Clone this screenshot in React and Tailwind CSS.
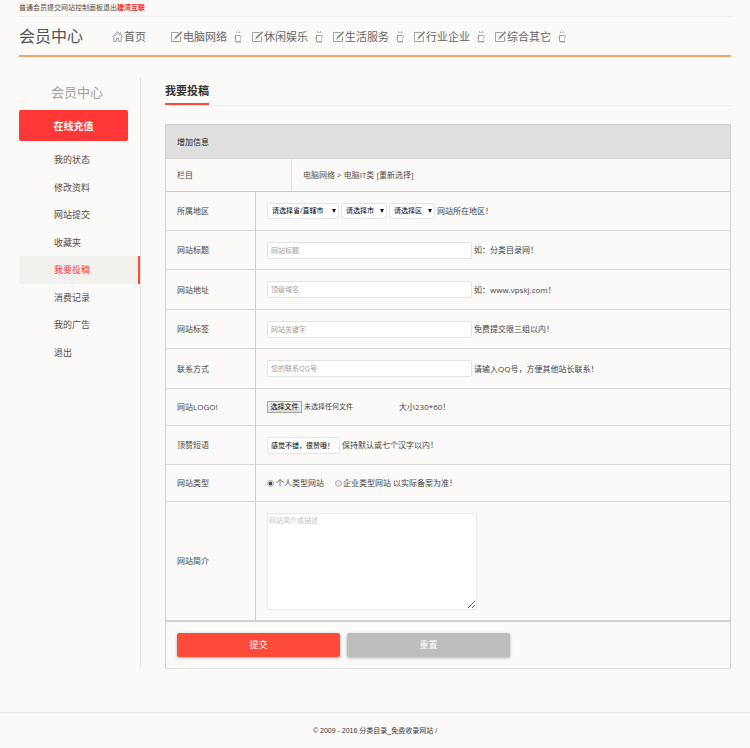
import React, { useState } from "react";

const navs = ["电脑网络", "休闲娱乐", "生活服务", "行业企业", "综合其它"];

const menus = [
  "我的状态",
  "修改资料",
  "网站提交",
  "收藏夹",
  "我要投稿",
  "消费记录",
  "我的广告",
  "退出",
];

function HomeIcon() {
  return (
    <svg width="11" height="11" viewBox="0 0 11 11" fill="none" stroke="#8a8a8a">
      <path d="M0.5 5.8 5.5 0.8 10.5 5.8" strokeWidth="0.9" />
      <path d="M1.8 5.5V10.4H4.3V7.2H6.7V10.4H9.2V5.5" strokeWidth="0.8" />
      <path d="M2.8 5.2 5.5 2.6 8.2 5.2M8.6 1V3" strokeWidth="0.6" />
    </svg>
  );
}

function EditIcon() {
  return (
    <svg width="12" height="11" viewBox="0 0 12 11" fill="none">
      <path d="M7.5 1.5H0.5V10.5H9.5V5.5" stroke="#a2a2a2" />
      <path d="M4.2 7.2 10.6 0.9" stroke="#8a8a8a" strokeWidth="1.8" />
      <path d="M3.2 8.3 4.8 7.5" stroke="#8a8a8a" strokeWidth="0.8" />
    </svg>
  );
}

function CupIcon() {
  return (
    <svg width="8" height="12" viewBox="0 0 8 12" fill="none">
      <path d="M2 1.5H3.6M4.6 1.5H6.4" stroke="#b0b0b0" />
      <path d="M2.5 0V1.6M5.5 0V1.6" stroke="#b8b8b8" strokeWidth="0.8" />
      <path d="M1 4.5H6.4M1.5 4.5V10" stroke="#a0a0a0" />
      <path d="M6.5 4.5V10M7.5 4V7M0.5 6V8" stroke="#d2d2d2" />
      <path d="M1.5 10.8H7" stroke="#8f8f8f" strokeWidth="1.2" />
    </svg>
  );
}

function Row({ label, htmlFor, className = "min-h-[39px]", children }) {
  return (
    <div className={`flex border-b border-[#d6d6d6] ${className}`}>
      <label
        htmlFor={htmlFor}
        className="flex w-[90px] shrink-0 items-center border-r border-[#cfcfcf] pl-[11px]"
      >
        {label}
      </label>
      <div className="flex flex-1 items-center pl-[11px]">{children}</div>
    </div>
  );
}

function TextField({ id, placeholder, hint }) {
  return (
    <>
      <input
        id={id}
        type="text"
        placeholder={placeholder}
        className="h-[17px] w-[205px] rounded-[2px] border border-[#e4e4e4] bg-white px-[3px] text-[7px] outline-none placeholder:text-[#a59c94]"
      />
      <span className="ml-[2px]">{hint}</span>
    </>
  );
}

function Select({ id, label, className }) {
  return (
    <span className={`relative mr-[2px] ${className}`}>
      <select
        id={id}
        aria-label={label}
        className="block h-4 w-full appearance-none rounded-[2px] border border-[#e4e4e4] bg-white pl-[4px] text-[7px] text-black outline-none"
      >
        <option>{label}</option>
      </select>
      <svg
        className="pointer-events-none absolute top-[6px] right-[3px]"
        width="4"
        height="4"
        viewBox="0 0 4 4"
      >
        <path d="M0 0H4L2 4Z" fill="#111" />
      </svg>
    </span>
  );
}

const radioClass =
  "size-[7px] appearance-none rounded-full border border-[#adadad] bg-[#e6e6e6] checked:bg-[radial-gradient(circle,#444_40%,#e6e6e6_60%)]";

export default function App() {
  const [type, setType] = useState("person");

  return (
    <div className="min-h-screen bg-[#fbfaf8] font-['Open_Sans','Noto_Sans_CJK_SC',sans-serif] text-[8px] leading-[12px] text-[#444]">
      <header className="px-[19px]">
        <div className="flex h-[17px] items-center border-b border-[#ededeb] text-[7px] text-[#5c4a3a]">
          <a href="#">普通会员</a>
          <a href="#">提交网站</a>
          <a href="#">控制面板</a>
          <a href="#">退出</a>
          <a href="#" className="font-bold text-[#ff1a1a]">
            建湾互联
          </a>
        </div>
        <div className="flex h-10 items-center border-b-2 border-[#f4a460]">
          <h1 className="w-[93px] text-[16px] leading-[24px] text-[#555]">会员中心</h1>
          <nav className="flex items-center pt-px text-[11px] leading-[16px] text-[#666]">
            <a href="#" className="mr-[25px] flex items-center gap-px">
              <HomeIcon />
              首页
            </a>
            {navs.map((nav) => (
              <a href="#" key={nav} className="mr-[10px] flex items-center">
                <EditIcon />
                <span className="mr-[7px]">{nav}</span>
                <CupIcon />
              </a>
            ))}
          </nav>
        </div>
      </header>

      <div className="flex px-[19px] pt-[21px]">
        <aside className="w-[122px] shrink-0 border-r border-[#e2e2e0]">
          <h2 className="pt-1 pr-[5px] text-center text-[13px] leading-[20px] text-[#a89f97]">
            会员中心
          </h2>
          <button className="mt-2 block h-[31px] w-[109px] rounded-[2px] bg-[#ff3737] text-[10px] font-bold text-white">
            在线充值
          </button>
          <ul className="mt-[5px] flex h-[220px] flex-col text-[9px] text-[#5a4a3c]">
            {menus.map((menu) => (
              <li key={menu} className="flex flex-1">
                <a
                  href="#"
                  className={
                    menu === "我要投稿"
                      ? "flex flex-1 items-center border-r-2 border-[#ff4a3a] bg-[#f2f1ee] pt-px pl-[35px] text-[#ff3737]"
                      : "flex flex-1 items-center pt-px pl-[35px]"
                  }
                >
                  {menu}
                </a>
              </li>
            ))}
          </ul>
        </aside>

        <main className="ml-6 flex-1">
          <div className="flex h-7 border-b border-[#ededeb]">
            <h2 className="h-[27px] border-b-2 border-[#ff4a3a] pt-[5px] text-[11px] leading-[16px] font-bold text-[#333]">
              我要投稿
            </h2>
          </div>

          <form
            className="mt-[18px] border border-[#cfcfcf] border-b-[#e2e2e0]"
            onSubmit={(e) => e.preventDefault()}
          >
            <div className="flex h-[34px] items-center border-b border-[#d6d6d6] bg-[#dfdfdf] pl-[11px] text-[#222]">
              增加信息
            </div>
            <div className="flex h-[33px] border-b border-[#c9c9c9]">
              <div className="flex w-[126px] items-center border-r border-[#e2e2e0] pl-[11px]">
                栏目
              </div>
              <div className="flex flex-1 items-center pl-[11px] text-[#5a4a3c]">
                电脑网络 &gt; 电脑IT类 [<a href="#">重新选择</a>]
              </div>
            </div>

            <Row label="所属地区" htmlFor="province">
              <Select id="province" label="请选择省/直辖市" className="w-[72px]" />
              <Select id="city" label="请选择市" className="w-[46px]" />
              <Select id="area" label="请选择区" className="w-[46px]" />
              网站所在地区！
            </Row>
            <Row label="网站标题" htmlFor="title">
              <TextField id="title" placeholder="网站标题" hint="如：分类目录网！" />
            </Row>
            <Row label="网站地址" htmlFor="url" className="min-h-10">
              <TextField id="url" placeholder="顶级域名" hint="如：www.vpskj.com！" />
            </Row>
            <Row label="网站标签" htmlFor="tags">
              <TextField id="tags" placeholder="网站关键字" hint="免费提交限三组以内！" />
            </Row>
            <Row label="联系方式" htmlFor="qq" className="min-h-10">
              <TextField
                id="qq"
                placeholder="您的联系QQ号"
                hint="请输入QQ号，方便其他站长联系！"
              />
            </Row>
            <Row label="网站LOGO!" htmlFor="logo" className="min-h-[37px]">
              <label className="relative flex w-[132px] items-center gap-[2px] text-[7px]">
                <span className="flex h-3 w-[35px] items-center justify-center border border-[#a6a6a6] bg-linear-to-b from-[#f4f4f4] to-[#dcdcdc] text-black">
                  选择文件
                </span>
                未选择任何文件
                <input id="logo" type="file" className="sr-only" />
              </label>
              大小230*60！
            </Row>
            <Row label="顶赞短语" htmlFor="phrase">
              <input
                id="phrase"
                type="text"
                defaultValue="感觉不错，很赞哦！"
                className="h-[17px] w-[73px] rounded-[2px] border border-[#e4e4e4] bg-white px-[3px] text-[7px] text-black outline-none"
              />
              <span className="ml-[2px]">保持默认或七个汉字以内！</span>
            </Row>
            <Row label="网站类型" htmlFor="person" className="min-h-[37px]">
              <label className="mr-[11px] flex items-center gap-[2px]">
                <input
                  id="person"
                  type="radio"
                  name="type"
                  checked={type === "person"}
                  onChange={() => setType("person")}
                  className={radioClass}
                />
                个人类型网站
              </label>
              <label className="mr-[2px] flex items-center gap-px">
                <input
                  type="radio"
                  name="type"
                  checked={type === "company"}
                  onChange={() => setType("company")}
                  className={radioClass}
                />
                企业类型网站
              </label>
              以实际备案为准！
            </Row>
            <Row label="网站简介" htmlFor="intro" className="min-h-[119px]">
              <textarea
                id="intro"
                placeholder="网站简介或描述"
                className="h-[97px] w-[210px] border border-[#e9e9e9] bg-white px-px py-[2px] text-[7px] leading-[9px] outline-none placeholder:text-[#c4c4c4]"
              />
            </Row>

            <div className="flex gap-[7px] border-t border-[#cfcfcf] px-[11px] py-[11px] text-[9px] text-white">
              <button
                type="submit"
                className="h-6 w-[163px] rounded-[2px] bg-[#ff4a3a] shadow-[0_1px_3px_rgba(0,0,0,0.3)]"
              >
                提交
              </button>
              <button
                type="reset"
                className="h-6 w-[163px] rounded-[2px] bg-[#bdbdbd] shadow-[0_1px_3px_rgba(0,0,0,0.3)]"
              >
                重置
              </button>
            </div>
          </form>
        </main>
      </div>

      <footer className="mt-[43px] border-t border-[#e5e4de] py-3 text-center font-['Liberation_Sans','Noto_Sans_CJK_SC',sans-serif] text-[7px] text-[#333]">
        © 2009 - 2016 分类目录_免费收录网站 /
      </footer>
    </div>
  );
}
